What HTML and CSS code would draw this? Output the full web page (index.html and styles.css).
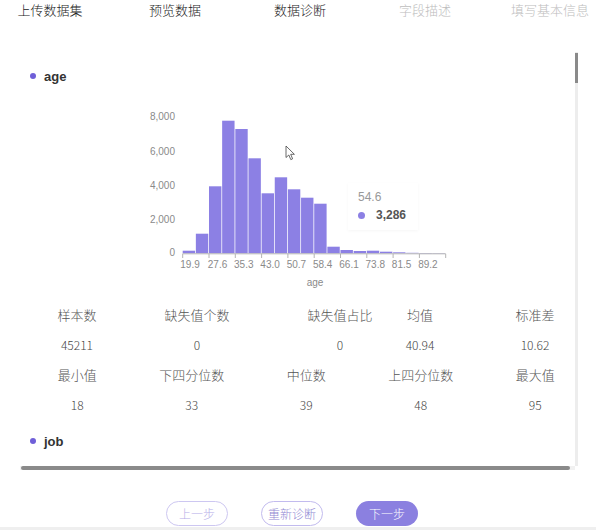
FILE: index.html
```html
<!DOCTYPE html>
<html lang="zh-CN">
  <head>
    <meta charset="UTF-8" />
    <meta name="viewport" content="width=device-width, initial-scale=1.0" />
    <title>数据诊断</title>
    <link rel="stylesheet" href="styles.css">
  </head>
  <body>
    <div class="steps">
      <div class="step">上传数据集</div>
      <div class="step">预览数据</div>
      <div class="step">数据诊断</div>
      <div class="step todo">字段描述</div>
      <div class="step todo">填写基本信息</div>
    </div>

    <div class="panel">
      <div class="panel-body">
        <div class="panel-content">
          <div class="field-title"><span class="dot"></span>age</div>

          <div class="chart">
            <svg width="555" height="200" viewBox="0 0 555 200">
              <!-- y axis labels -->
              <g class="axis-label" text-anchor="end">
                <text x="155" y="20.2">8,000</text>
                <text x="155" y="54.5">6,000</text>
                <text x="155" y="88.5">4,000</text>
                <text x="155" y="122.5">2,000</text>
                <text x="155" y="156.2">0</text>
              </g>

              <!-- bars -->
              <g fill="#8c80e4">
                <rect x="162.7" y="150.7" width="12.4" height="2.6" />
                <rect x="175.85" y="133.7" width="12.4" height="19.6" />
                <rect x="189" y="86.3" width="12.4" height="67" />
                <rect x="202.15" y="20.7" width="12.4" height="132.6" />
                <rect x="215.3" y="29" width="12.4" height="124.3" />
                <rect x="228.45" y="58.3" width="12.4" height="95" />
                <rect x="241.6" y="93.3" width="12.4" height="60" />
                <rect x="254.75" y="77.3" width="12.4" height="76" />
                <rect x="267.9" y="89.3" width="12.4" height="64" />
                <rect x="281.05" y="97.7" width="12.4" height="55.6" />
                <rect x="294.2" y="103.7" width="12.4" height="49.6" />
                <rect x="307.35" y="146.7" width="12.4" height="6.6" />
                <rect x="320.5" y="150" width="12.4" height="3.3" />
                <rect x="333.65" y="151" width="12.4" height="2.3" />
                <rect x="346.8" y="150.7" width="12.4" height="2.6" />
                <rect x="359.95" y="151.7" width="12.4" height="1.6" />
                <rect x="373.1" y="152.3" width="12.4" height="1" />
                <rect x="386.25" y="152.8" width="12.4" height="0.5" />
                <rect x="399.4" y="153" width="12.4" height="0.4" />
                <rect x="412.55" y="153" width="12.4" height="0.3" />
              </g>

              <!-- x axis -->
              <g stroke="#b4b4b4" stroke-width="1">
                <line x1="162.7" y1="153.8" x2="425.7" y2="153.8" />
                <line x1="162.7" y1="153.8" x2="162.7" y2="158" />
                <line x1="189" y1="153.8" x2="189" y2="158" />
                <line x1="215.3" y1="153.8" x2="215.3" y2="158" />
                <line x1="241.6" y1="153.8" x2="241.6" y2="158" />
                <line x1="267.9" y1="153.8" x2="267.9" y2="158" />
                <line x1="294.2" y1="153.8" x2="294.2" y2="158" />
                <line x1="320.5" y1="153.8" x2="320.5" y2="158" />
                <line x1="346.8" y1="153.8" x2="346.8" y2="158" />
                <line x1="373.1" y1="153.8" x2="373.1" y2="158" />
                <line x1="399.4" y1="153.8" x2="399.4" y2="158" />
                <line x1="425.7" y1="153.8" x2="425.7" y2="158" />
              </g>
              <g class="axis-label" text-anchor="middle">
                <text x="170" y="167.5">19.9</text>
                <text x="197.5" y="167.5">27.6</text>
                <text x="223.8" y="167.5">35.3</text>
                <text x="250.1" y="167.5">43.0</text>
                <text x="276.4" y="167.5">50.7</text>
                <text x="302.7" y="167.5">58.4</text>
                <text x="329" y="167.5">66.1</text>
                <text x="355.3" y="167.5">73.8</text>
                <text x="381.6" y="167.5">81.5</text>
                <text x="407.9" y="167.5">89.2</text>
              </g>
              <text class="axis-label" x="295" y="185.5" text-anchor="middle">age</text>

              <!-- mouse pointer -->
              <path d="M266 46 L266 57.5 L268.8 55 L270.8 59.6 L272.6 58.8 L270.7 54.3 L274.4 54.3 Z"
                    fill="#fff" stroke="#444" stroke-width="0.8" stroke-linejoin="round" />
            </svg>

            <div class="tooltip">
              <div class="tip-name">54.6</div>
              <div class="tip-value"><span class="tip-dot"></span>3,286</div>
            </div>
          </div>

          <div class="stats stats-top">
            <div class="label">样本数</div>
            <div class="label">缺失值个数</div>
            <div class="label">缺失值占比</div>
            <div class="label">均值</div>
            <div class="label">标准差</div>
            <div class="value">45211</div>
            <div class="value">0</div>
            <div class="value">0</div>
            <div class="value">40.94</div>
            <div class="value">10.62</div>
          </div>
          <div class="stats stats-bottom">
            <div class="label">最小值</div>
            <div class="label">下四分位数</div>
            <div class="label">中位数</div>
            <div class="label">上四分位数</div>
            <div class="label">最大值</div>
            <div class="value">18</div>
            <div class="value">33</div>
            <div class="value">39</div>
            <div class="value">48</div>
            <div class="value">95</div>
          </div>

          <div class="field-title job"><span class="dot"></span>job</div>
        </div>
        <div class="vscroll"><div class="vthumb"></div></div>
      </div>
      <div class="hscroll"><div class="hthumb"></div></div>
    </div>

    <div class="actions">
      <button class="btn prev">上一步</button>
      <button class="btn redo">重新诊断</button>
      <button class="btn next">下一步</button>
    </div>
    <div class="footer-strip"></div>
  </body>
</html>
```

FILE: styles.css
```css
body {
  margin: 0;
  overflow: hidden;
  background: #fff;
  font-family: "Noto Sans CJK SC", "Liberation Sans", sans-serif;
  font-weight: 300;
  color: #333;
}

/* step tabs */
.steps {
  display: flex;
  margin-left: -12.5px;
  height: 20px;
}
.step {
  flex: 0 0 125px;
  text-align: center;
  font-size: 13px;
  line-height: 20px;
  color: #222;
  white-space: nowrap;
}
.step.todo {
  color: #bdbdbd;
}

/* scroll panel */
.panel {
  margin: 32px 0 0 20px;
  width: 559px;
}
.panel-body {
  display: flex;
  height: 414px;
}
.panel-content {
  width: 555px;
  overflow: hidden;
  padding-top: 15px;
  box-sizing: border-box;
}
.vscroll {
  width: 3px;
  background: #ededed;
}
.vthumb {
  margin-top: 1px;
  height: 30px;
  background: #8a8a8a;
}
.hscroll {
  width: 555px;
  height: 4px;
  background: #f1f1f1;
}
.hthumb {
  margin-left: 1px;
  width: 549px;
  height: 4px;
  border-radius: 2px;
  background: #8a8a8a;
}

.field-title {
  display: flex;
  align-items: center;
  height: 18px;
  font-family: "Liberation Sans", "Noto Sans CJK SC", sans-serif;
  font-size: 13px;
  font-weight: bold;
  color: #333;
}
.field-title .dot {
  width: 6px;
  height: 6px;
  border-radius: 50%;
  background: #6f5fd8;
  margin: 0 8px 0 10px;
}
.field-title.job {
  margin-top: 12px;
}

/* histogram */
.chart {
  position: relative;
  margin-top: 15px;
  height: 200px;
}
.chart svg {
  display: block;
}
.axis-label {
  font-family: "Liberation Sans", sans-serif;
  font-size: 10px;
  fill: #8a8a8a;
}
.tooltip {
  position: absolute;
  left: 328px;
  top: 83px;
  width: 70px;
  padding: 5px 0 6px 10px;
  box-sizing: border-box;
  background: #fff;
  box-shadow: 0 1px 3px rgba(0, 0, 0, 0.04);
  font-family: "Liberation Sans", sans-serif;
  font-weight: normal;
  font-size: 12px;
  line-height: 18px;
}
.tip-name {
  color: #999;
}
.tip-value {
  display: flex;
  align-items: center;
  font-weight: bold;
  color: #555;
}
.tip-dot {
  width: 7px;
  height: 7px;
  border-radius: 50%;
  background: #8c80e4;
  margin-right: 11px;
}

/* stats table */
.stats {
  display: grid;
  grid-auto-rows: 30px;
  line-height: 30px;
  text-align: center;
  white-space: nowrap;
}
.stats-top {
  padding-left: 17px;
  grid-template-columns: 80px 160px 126px 34px 196px;
}
.stats-bottom {
  grid-template-columns: repeat(5, 114.5px);
}
.stats .label {
  font-size: 13px;
  color: #555;
}
.stats .value {
  font-size: 12px;
  color: #444;
}

/* footer buttons */
.actions {
  display: flex;
  justify-content: center;
  gap: 33px;
  margin-top: 31px;
  padding-right: 12px;
}
.btn {
  width: 62px;
  height: 25px;
  padding: 0;
  border: 1px solid #cdc7f1;
  border-radius: 13px;
  background: #fff;
  font-family: "Noto Sans CJK SC", sans-serif;
  font-weight: 300;
  font-size: 12px;
  color: #b6aee8;
}
.btn.redo {
  border-color: #c2bbee;
  color: #8f87d2;
}
.btn.next {
  border: none;
  background: #8b80e0;
  color: #fff;
}
.footer-strip {
  margin-top: 1px;
  height: 10px;
  background: #efefef;
}
```
